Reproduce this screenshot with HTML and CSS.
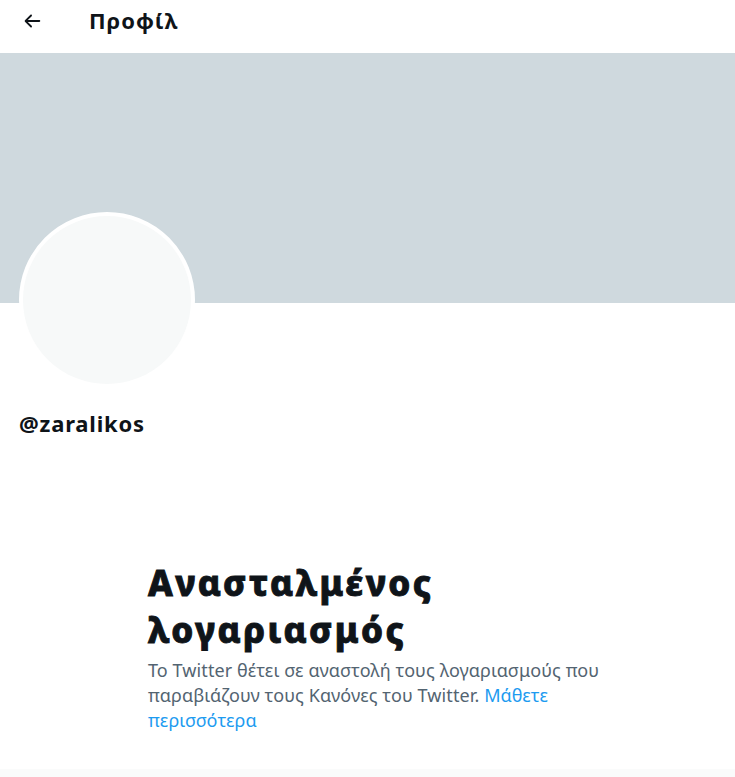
FILE: index.html
```html
<!DOCTYPE html>
<html lang="el">
<head>
<meta charset="utf-8">
<link rel="stylesheet" href="styles.css">
</head>
<body>
<div class="page">
  <header class="topbar">
    <div class="back">
      <svg viewBox="0 0 24 24" width="22" height="22"><path d="M20 11H7.414l4.293-4.293c.39-.39.39-1.023 0-1.414s-1.023-.39-1.414 0l-6 6c-.39.39-.39 1.023 0 1.414l6 6c.195.195.45.293.707.293s.512-.098.707-.293c.39-.39.39-1.023 0-1.414L7.414 13H20c.553 0 1-.447 1-1s-.447-1-1-1z" fill="#0f1419"/></svg>
    </div>
    <h1 class="title">Προφίλ</h1>
  </header>
  <div class="banner"></div>
  <div class="profile">
    <div class="avatar"></div>
    <div class="handle">@zaralikos</div>
  </div>
  <section class="suspended">
    <h2 class="heading">Ανασταλμένος λογαριασμός</h2>
    <p class="desc">Το Twitter θέτει σε αναστολή τους λογαριασμούς που παραβιάζουν τους Κανόνες του Twitter. <span class="link">Μάθετε περισσότερα</span></p>
  </section>
  <div class="footer-band"></div>
</div>
</body>
</html>
```
FILE: styles.css
```css
html, body {
  margin: 0;
  padding: 0;
  background: #fff;
}
body {
  font-family: "Noto Sans", "Open Sans", sans-serif;
  color: #0f1419;
  overflow: hidden;
}
.page {
  width: 735px;
  height: 777px;
  display: flex;
  flex-direction: column;
  position: relative;
}
.topbar {
  height: 53px;
  display: flex;
  align-items: center;
  padding-left: 21px;
  box-sizing: border-box;
  flex-shrink: 0;
}
.back {
  width: 22px;
  height: 22px;
  display: flex;
  margin-top: -11px;
}
.title {
  margin: -13px 0 0 46px;
  font-size: 22px;
  font-weight: 700;
  line-height: 26px;
  letter-spacing: 1px;
}
.banner {
  height: 250px;
  background: #cfd9de;
  flex-shrink: 0;
}
.profile {
  padding-left: 19px;
  flex-shrink: 0;
}
.avatar {
  width: 168px;
  height: 168px;
  border-radius: 50%;
  background: #f7f9f9;
  border: 4px solid #fff;
  margin-top: -91px;
}
.handle {
  margin-top: 22px;
  font-size: 22px;
  font-weight: 700;
  line-height: 26px;
  letter-spacing: 0.8px;
}
.suspended {
  margin: 123px 0 0 148px;
  width: 460px;
}
.heading {
  margin: 0;
  font-size: 35px;
  font-weight: 800;
  line-height: 47px;
  letter-spacing: 2.5px;
  -webkit-text-stroke: 0.9px #0f1419;
}
.desc {
  margin: 5px 0 0;
  font-size: 18px;
  line-height: 25px;
  letter-spacing: 0.1px;
  color: #536471;
}
.link {
  color: #1d9bf0;
}
.footer-band {
  position: absolute;
  left: 0;
  right: 0;
  bottom: 0;
  height: 8px;
  background: #fafbfb;
}
```
